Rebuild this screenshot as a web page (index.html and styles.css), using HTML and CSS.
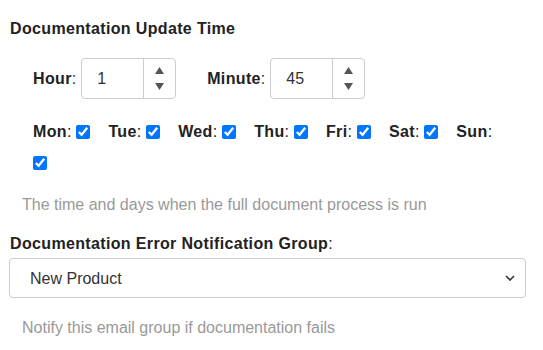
FILE: index.html
```html
<!DOCTYPE html>
<html lang="en">
<head>
  <meta charset="UTF-8" />
  <title>Documentation Settings</title>
  <link rel="stylesheet" href="styles.css">
</head>
<body>

  <div class="settings">
    <h3>Documentation Update Time</h3>

    <div class="time-row">
      <label class="field">
        <span><b>Hour</b>:</span>
        <span class="num-box">
          <input type="text" value="1">
          <span class="spin">
            <svg width="9" height="7" viewBox="0 0 9 7"><path d="M4.5 0 L9 7 L0 7 Z" fill="#555"/></svg>
            <svg width="9" height="7" viewBox="0 0 9 7"><path d="M0 0 L9 0 L4.5 7 Z" fill="#555"/></svg>
          </span>
        </span>
      </label>
      <label class="field">
        <span><b>Minute</b>:</span>
        <span class="num-box">
          <input type="text" value="45">
          <span class="spin">
            <svg width="9" height="7" viewBox="0 0 9 7"><path d="M4.5 0 L9 7 L0 7 Z" fill="#555"/></svg>
            <svg width="9" height="7" viewBox="0 0 9 7"><path d="M0 0 L9 0 L4.5 7 Z" fill="#555"/></svg>
          </span>
        </span>
      </label>
    </div>

    <div class="days">
      <label class="day"><span><b>Mon</b>:</span><input type="checkbox" checked></label>
      <label class="day"><span><b>Tue</b>:</span><input type="checkbox" checked></label>
      <label class="day"><span><b>Wed</b>:</span><input type="checkbox" checked></label>
      <label class="day"><span><b>Thu</b>:</span><input type="checkbox" checked></label>
      <label class="day"><span><b>Fri</b>:</span><input type="checkbox" checked></label>
      <label class="day"><span><b>Sat</b>:</span><input type="checkbox" checked></label>
      <label class="day"><span><b>Sun</b>:</span></label>
      <span class="break"></span>
      <label class="day wrapped"><input type="checkbox" checked></label>
    </div>

    <p class="help">The time and days when the full document process is run</p>

    <label class="group-label"><b>Documentation Error Notification Group</b>:</label>
    <div class="select-wrap">
      <select>
        <option>New Product</option>
        <option>Support</option>
      </select>
      <svg class="chevron" width="10" height="6" viewBox="0 0 10 6"><path d="M1 1 L5 5 L9 1" fill="none" stroke="#333" stroke-width="1.6"/></svg>
    </div>

    <p class="help last">Notify this email group if documentation fails</p>
  </div>

</body>
</html>
```

FILE: styles.css
```css
* { box-sizing: border-box; }
body {
  margin: 0;
  font-family: "Liberation Sans", Arial, sans-serif;
  font-size: 16px;
  color: #333;
  background: #fff;
}
b, h3 { letter-spacing: 0.35px; }
.settings {
  padding: 0 17px 0 9px;
}
h3 {
  font-size: 16px;
  margin: 20px 0 0 1px;
  color: #222;
}

/* Hour / minute */
.time-row {
  display: flex;
  gap: 31px;
  margin: 20px 0 0 24px;
}
.field {
  display: flex;
  align-items: center;
  gap: 5px;
}
.field b { color: #222; }
.num-box {
  display: flex;
  width: 95px;
  height: 41px;
  border: 1px solid #ccc;
  border-radius: 4px;
}
.num-box input {
  width: 61px;
  border: none;
  outline: none;
  padding: 0 0 0 15px;
  font: inherit;
  color: #333;
  background: transparent;
}
.spin {
  display: flex;
  flex-direction: column;
  justify-content: center;
  align-items: center;
  gap: 9px;
  width: 33px;
  border-left: 1px solid #ccc;
}

/* Days */
.days {
  display: flex;
  flex-wrap: wrap;
  margin: 22px 0 0 24px;
}
.day {
  display: flex;
  align-items: center;
  height: 22px;
  margin-right: 18px;
  color: #222;
}
.day input {
  width: 14px;
  height: 14px;
  margin: 0 0 0 5px;
  accent-color: #0075ff;
}
.break { flex-basis: 100%; }
.day.wrapped { margin-top: 9px; }
.day.wrapped input { margin-left: 0; }

.help {
  color: #999;
  margin: 22px 0 0 13px;
}
.help.last { margin-top: 21px; }
.group-label {
  display: block;
  margin: 21px 0 0 1px;
  color: #222;
}
.select-wrap {
  position: relative;
  margin-top: 5px;
}
.select-wrap select {
  appearance: none;
  width: 100%;
  height: 40px;
  border: 1px solid #ccc;
  border-radius: 4px;
  padding: 0 0 0 20px;
  font: inherit;
  color: #333;
  background: #fff;
}
.chevron {
  position: absolute;
  right: 11px;
  top: 17px;
}
```
